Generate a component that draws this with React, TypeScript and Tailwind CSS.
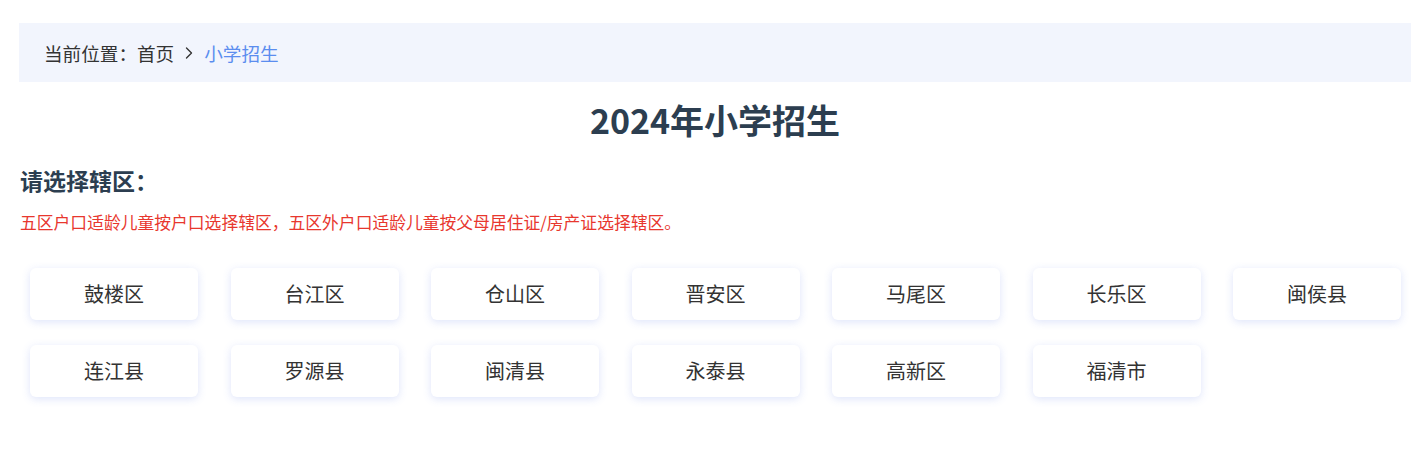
import { ChevronRight } from 'lucide-react';

const districts = [
  '鼓楼区',
  '台江区',
  '仓山区',
  '晋安区',
  '马尾区',
  '长乐区',
  '闽侯县',
  '连江县',
  '罗源县',
  '闽清县',
  '永泰县',
  '高新区',
  '福清市',
];

export default function App() {
  return (
    <div
      className="min-h-[471px] w-full bg-white pt-[23px] pl-[19px] pr-[1px]"
      style={{ fontFamily: '"Noto Sans CJK SC", "Noto Sans", sans-serif' }}
    >
      <div className="flex h-[59px] items-center bg-[#f2f5fd] pl-[25px] text-[18.6px] text-[#333]">
        <span>当前位置：</span>
        <span>首页</span>
        <ChevronRight className="mx-[5px] h-[20px] w-[20px] text-[#333]" strokeWidth={1.6} />
        <span className="text-[#5b8def]">小学招生</span>
      </div>

      <h1 className="mt-[16px] text-center text-[34px] font-bold leading-[44px] text-[#2c3e50]">
        2024年小学招生
      </h1>

      <h2 className="mt-[23px] pl-[1px] text-[23px] font-bold leading-[30px] text-[#2c3e50]">请选择辖区：</h2>

      <p className="mt-[15px] pl-[1px] text-[16.8px] leading-[24px] text-[#e8372e]">
        五区户口适龄儿童按户口选择辖区，五区外户口适龄儿童按父母居住证/房产证选择辖区。
      </p>

      <div className="mt-[34px] grid grid-cols-[repeat(7,168px)] gap-x-[32.5px] gap-y-[25px] pl-[11px]">
        {districts.map((name) => (
          <div
            key={name}
            className="flex h-[52px] items-center justify-center rounded-[6px] bg-white text-[20px] text-[#333] shadow-[0_2px_8px_rgba(90,120,230,0.2)]"
          >
            {name}
          </div>
        ))}
      </div>
    </div>
  );
}
